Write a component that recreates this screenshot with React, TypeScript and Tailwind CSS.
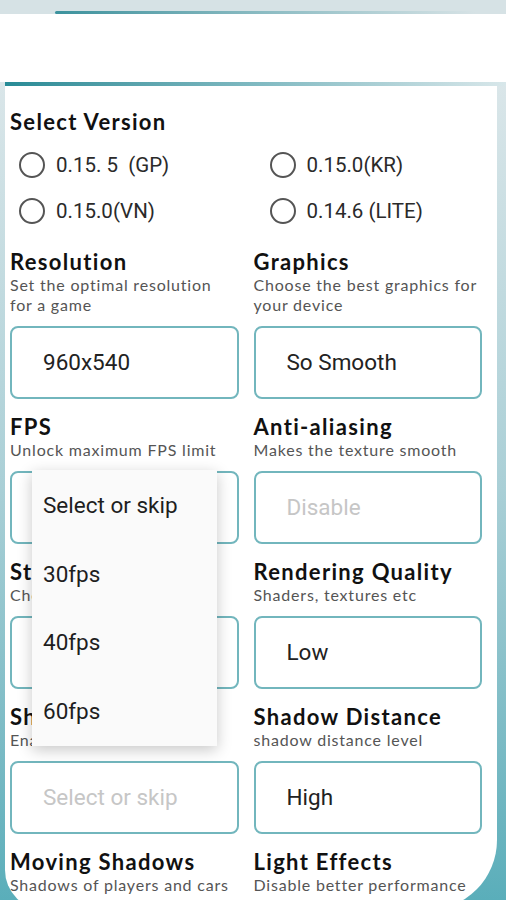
const heading = "font-['Lato',sans-serif]";
const roboto = "font-['Roboto',sans-serif]";

type Setting = {
  title: string;
  desc: string[];
  value: string;
  placeholder?: boolean;
};

const settings: Setting[] = [
  { title: "Resolution", desc: ["Set the optimal resolution", "for a game"], value: "960x540" },
  { title: "Graphics", desc: ["Choose the best graphics for", "your device"], value: "So Smooth" },
  { title: "FPS", desc: ["Unlock maximum FPS limit"], value: "Select or skip", placeholder: true },
  { title: "Anti-aliasing", desc: ["Makes the texture smooth"], value: "Disable", placeholder: true },
  { title: "Style", desc: ["Choose a game style"], value: "Select or skip", placeholder: true },
  { title: "Rendering Quality", desc: ["Shaders, textures etc"], value: "Low" },
  { title: "Shadows", desc: ["Enable or disable shadows"], value: "Select or skip", placeholder: true },
  { title: "Shadow Distance", desc: ["shadow distance level"], value: "High" },
  { title: "Moving Shadows", desc: ["Shadows of players and cars"], value: "Select or skip", placeholder: true },
  { title: "Light Effects", desc: ["Disable better performance"], value: "Select or skip", placeholder: true },
];

const versions = ["0.15. 5  (GP)", "0.15.0(KR)", "0.15.0(VN)", "0.14.6 (LITE)"];
const fpsOptions = ["Select or skip", "30fps", "40fps", "60fps"];

function Radio({ label, right }: { label: string; right: boolean }) {
  return (
    <div className={`flex h-[46px] items-center gap-[11px] ${right ? "pl-[16px]" : "pl-[9px]"}`}>
      <span className="h-[26px] w-[26px] shrink-0 rounded-full border-[2px] border-[#555]" />
      <span className={`${roboto} whitespace-pre text-[20.5px] text-[#2a2a2a]`}>{label}</span>
    </div>
  );
}

function FpsMenu() {
  return (
    <div className="absolute left-[22px] top-[-1px] z-10 w-[185px] bg-[#fafafa] pt-[2px] shadow-[0_4px_14px_rgba(0,0,0,0.22)]">
      {fpsOptions.map((o) => (
        <div key={o} className={`${roboto} flex h-[68.5px] items-center pl-[11px] text-[22.5px] text-[#1e1e1e]`}>
          {o}
        </div>
      ))}
    </div>
  );
}

function SettingCell({ s }: { s: Setting }) {
  return (
    <div>
      <div className={`${heading} whitespace-nowrap text-[22px] font-bold leading-[27px] tracking-[0.06em] text-[#111]`}>
        {s.title}
      </div>
      {s.desc.map((d) => (
        <div key={d} className={`${heading} whitespace-nowrap text-[16px] leading-[20px] tracking-[0.05em] text-[#555]`}>
          {d}
        </div>
      ))}
      <div className="relative mt-[11px]">
        <div className="flex h-[73px] items-center rounded-[8px] border-[2px] border-[#72b6bd] pl-[31px] pt-[1px]">
          <span className={`${roboto} text-[22.5px] ${s.placeholder ? "text-[#c6c6c6]" : "text-[#222]"}`}>
            {s.value}
          </span>
        </div>
        {s.title === "FPS" && <FpsMenu />}
      </div>
    </div>
  );
}

export default function App() {
  return (
    <div className="relative h-[900px] w-[506px] overflow-hidden bg-white">
      <div className="flex h-[14px] flex-col justify-end bg-[#d6e2e5]">
        <div className="ml-[55px] h-[3px] w-[420px] rounded-l-full bg-gradient-to-r from-[#3b929d] via-[#8cbcc3] to-transparent" />
      </div>
      <div className="h-[68px] bg-white" />
      <div className="h-[818px] bg-gradient-to-b from-[#dae6e9] via-[#a9cfd6] to-[#5aaeba] pl-[5px] pr-[9px]">
        <div className="-ml-[5px] -mr-[9px] flex h-[4px]">
          <div className="w-[5px] bg-[#dae6e9]" />
          <div className="flex-1 bg-gradient-to-r from-[#278b96] via-[#7fb9c1] to-[#d8e7ea]" />
        </div>
        <div className="h-[824px] overflow-hidden rounded-bl-[40px] rounded-br-[70px] bg-white pl-[5px] pr-[15px] pt-[22px]">
          <div className={`${heading} text-[22px] font-bold leading-[27px] tracking-[0.06em] text-[#111]`}>
            Select Version
          </div>
          <div className="mt-[7px] grid grid-cols-2 gap-x-[15px]">
            {versions.map((v, i) => (
              <Radio key={v} label={v} right={i % 2 === 1} />
            ))}
          </div>
          <div className="mt-[14px] grid grid-cols-2 items-start gap-x-[15px] gap-y-[14px]">
            {settings.map((s) => (
              <SettingCell key={s.title} s={s} />
            ))}
          </div>
        </div>
      </div>
    </div>
  );
}
